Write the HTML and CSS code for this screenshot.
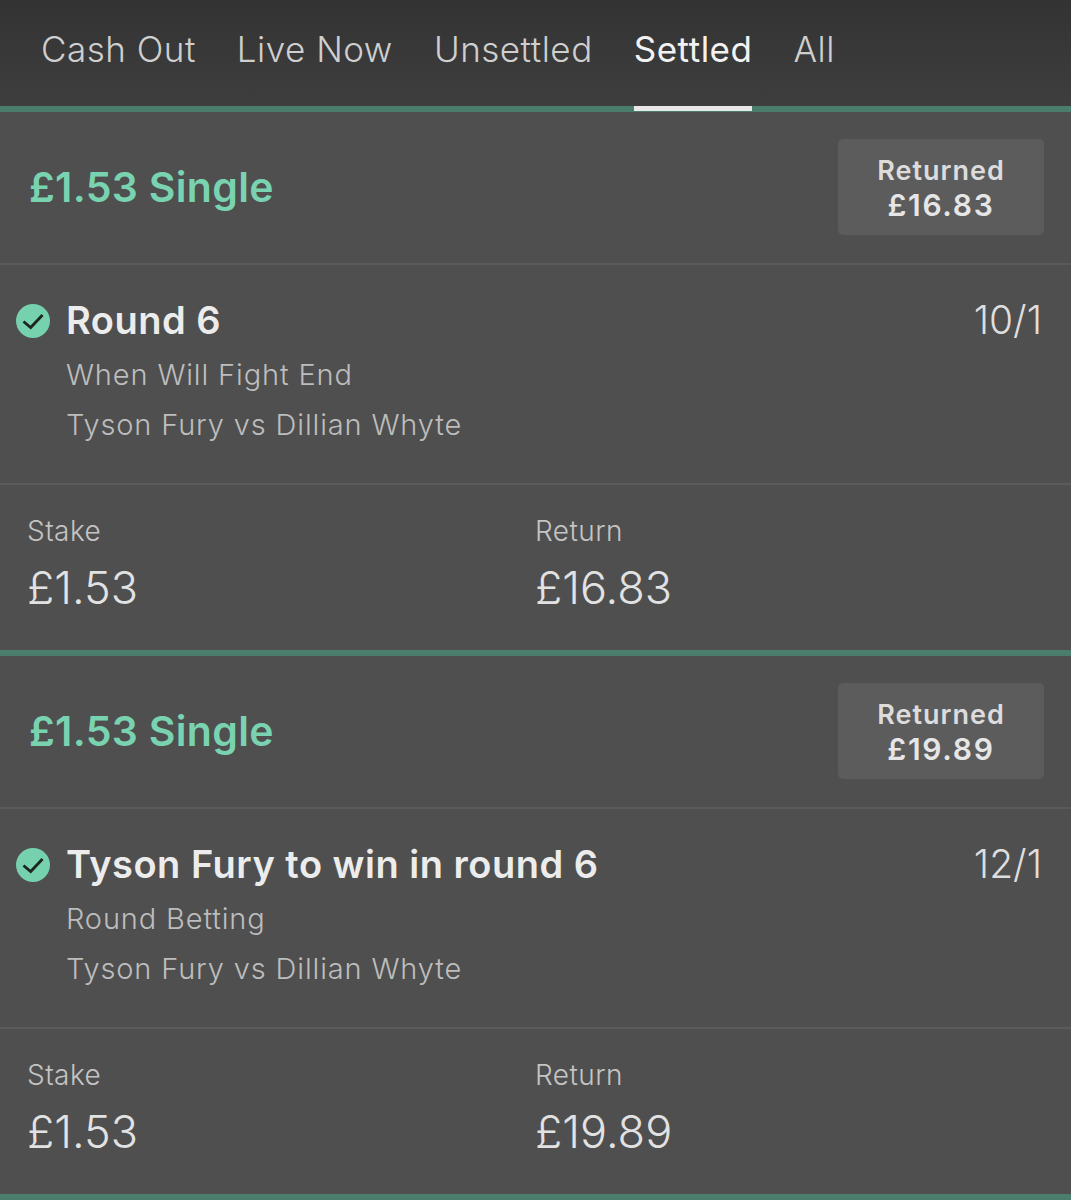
FILE: index.html
```html
<!DOCTYPE html>
<html lang="en">
<head>
  <meta charset="UTF-8" />
  <title>My Bets</title>
  <link rel="stylesheet" href="styles.css">
</head>
<body>

<nav class="tabs">
  <a href="#">Cash Out</a>
  <a href="#">Live Now</a>
  <a href="#">Unsettled</a>
  <a href="#" class="active">Settled</a>
  <a href="#">All</a>
</nav>

<section class="bet">
  <div class="bet-head">
    <div class="bet-title">£1.53 Single</div>
    <div class="returned">
      <span>Returned</span>
      <strong>£16.83</strong>
    </div>
  </div>
  <div class="selection">
    <svg class="tick" viewBox="0 0 34 34">
      <circle cx="17" cy="17" r="17" fill="#76d1ae"/>
      <path d="M7.5 17.5l7.2 6L26.5 11" fill="none" stroke="#1c2522" stroke-width="2.8"/>
    </svg>
    <div class="selection-info">
      <h3>Round 6</h3>
      <p>When Will Fight End</p>
      <p>Tyson Fury vs Dillian Whyte</p>
    </div>
    <div class="odds">10/1</div>
  </div>
  <div class="totals">
    <div class="total">
      <label>Stake</label>
      <div class="amount">£1.53</div>
    </div>
    <div class="total">
      <label>Return</label>
      <div class="amount">£16.83</div>
    </div>
  </div>
</section>

<section class="bet">
  <div class="bet-head">
    <div class="bet-title">£1.53 Single</div>
    <div class="returned">
      <span>Returned</span>
      <strong>£19.89</strong>
    </div>
  </div>
  <div class="selection">
    <svg class="tick" viewBox="0 0 34 34">
      <circle cx="17" cy="17" r="17" fill="#76d1ae"/>
      <path d="M7.5 17.5l7.2 6L26.5 11" fill="none" stroke="#1c2522" stroke-width="2.8"/>
    </svg>
    <div class="selection-info">
      <h3>Tyson Fury to win in round 6</h3>
      <p>Round Betting</p>
      <p>Tyson Fury vs Dillian Whyte</p>
    </div>
    <div class="odds">12/1</div>
  </div>
  <div class="totals">
    <div class="total">
      <label>Stake</label>
      <div class="amount">£1.53</div>
    </div>
    <div class="total">
      <label>Return</label>
      <div class="amount">£19.89</div>
    </div>
  </div>
</section>

</body>
</html>
```

FILE: styles.css
```css
* {
  margin: 0;
  padding: 0;
  box-sizing: border-box;
}

body {
  font-family: Inter, 'Liberation Sans', sans-serif;
  background-color: #4f4f4f;
  color: #e6e6e6;
  height: 1200px;
  overflow: hidden;
}

.tabs {
  display: flex;
  gap: 41px;
  height: 112px;
  padding: 0 0 0 41px;
  background: linear-gradient(#333333, #3e3e3e);
  border-bottom: 6px solid #4a7d6b;
}

.tabs a {
  height: 111px;
  padding-top: 29px;
  font-size: 35px;
  font-weight: 300;
  line-height: 40px;
  letter-spacing: 0.5px;
  color: #cfcfcf;
  text-decoration: none;
}

.tabs a.active {
  color: #f2f2f2;
  font-weight: 400;
  border-bottom: 5px solid #e8e8e8;
}

.bet {
  border-bottom: 6px solid #4a7d6b;
}

.bet-head {
  display: flex;
  justify-content: space-between;
  align-items: center;
  height: 153px;
  padding: 0 27px 2px 29px;
  border-bottom: 2px solid #5b5b5b;
}

.bet-title {
  font-size: 41px;
  font-weight: 600;
  letter-spacing: 0.3px;
  color: #79d3b0;
}

.returned {
  display: flex;
  flex-direction: column;
  align-items: center;
  justify-content: center;
  width: 206px;
  height: 96px;
  padding-top: 2px;
  background-color: #5c5c5c;
  border-radius: 5px;
  font-size: 27px;
  line-height: 35px;
}

.returned span {
  font-weight: 600;
  color: #dcdcdc;
  letter-spacing: 1px;
}

.returned strong {
  font-size: 30px;
  font-weight: 600;
  letter-spacing: 1.7px;
}

.selection {
  display: flex;
  align-items: flex-start;
  height: 220px;
  padding: 37px 29px 0 16px;
  border-bottom: 2px solid #5b5b5b;
}

.tick {
  width: 34px;
  height: 34px;
  margin-top: 2px;
  flex-shrink: 0;
}

.selection-info {
  flex: 1;
  margin-left: 16px;
}

.selection-info h3 {
  font-size: 38px;
  font-weight: 600;
  line-height: 36px;
  letter-spacing: 0.5px;
  margin-bottom: 12px;
  color: #ececec;
}

.selection-info p {
  font-size: 29px;
  font-weight: 300;
  line-height: 50px;
  letter-spacing: 0.85px;
  color: #bdbdbd;
}

.odds {
  font-size: 39px;
  font-weight: 300;
  line-height: 36px;
  color: #dedede;
}

.totals {
  display: flex;
  height: 165px;
  padding: 30px 0 0 27px;
}

.total {
  width: 508px;
}

.total label {
  display: block;
  font-size: 28px;
  font-weight: 300;
  line-height: 32px;
  letter-spacing: 0.45px;
  color: #c4c4c4;
}

.amount {
  margin-top: 14px;
  font-size: 45px;
  font-weight: 300;
  line-height: 54px;
  color: #e2e2e2;
}
```
